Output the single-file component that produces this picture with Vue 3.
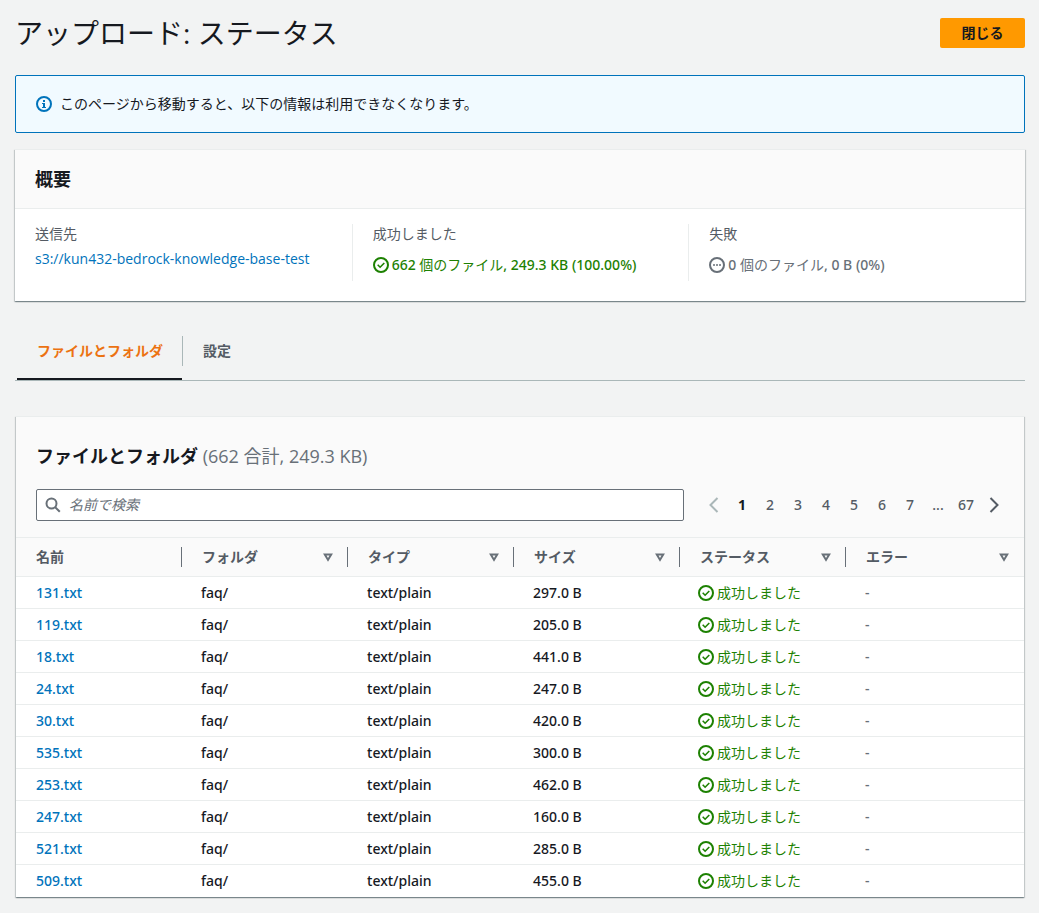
<script setup>
import { ref } from 'vue'

const columns = ['名前', 'フォルダ', 'タイプ', 'サイズ', 'ステータス', 'エラー']
const files = [
  ['131.txt', '297.0 B'],
  ['119.txt', '205.0 B'],
  ['18.txt', '441.0 B'],
  ['24.txt', '247.0 B'],
  ['30.txt', '420.0 B'],
  ['535.txt', '300.0 B'],
  ['253.txt', '462.0 B'],
  ['247.txt', '160.0 B'],
  ['521.txt', '285.0 B'],
  ['509.txt', '455.0 B'],
].map(([name, size]) => ({ name, size }))
const pages = ['1', '2', '3', '4', '5', '6', '7', '…', '67']
const page = ref('1')
const query = ref('')
</script>

<template>
  <main class="page" lang="ja">
    <header class="page-header">
      <h1>アップロード: ステータス</h1>
      <button type="button" class="primary">閉じる</button>
    </header>

    <div class="alert" role="status">
      <svg class="icon" viewBox="0 0 16 16" aria-hidden="true">
        <circle cx="8" cy="8" r="7" />
        <path class="solid" d="M7 4h2v2H7zM6 7h3v4h1v1H6v-1h1V8H6z" />
      </svg>
      <span>このページから移動すると、以下の情報は利用できなくなります。</span>
    </div>

    <section class="card summary">
      <div class="card-header"><h2>概要</h2></div>
      <dl class="facts">
        <div class="fact">
          <dt>送信先</dt>
          <dd><a href="#">s3://kun432-bedrock-knowledge-base-test</a></dd>
        </div>
        <div class="fact">
          <dt>成功しました</dt>
          <dd class="state success">
            <svg class="icon" viewBox="0 0 16 16" aria-hidden="true">
              <circle cx="8" cy="8" r="7" />
              <path d="M4.7 7.8l2.4 2.4 4.2-4.2" />
            </svg>
            <span><span class="latin">662</span> 個のファイル<span class="latin">, 249.3 KB (100.00%)</span></span>
          </dd>
        </div>
        <div class="fact">
          <dt>失敗</dt>
          <dd class="state muted">
            <svg class="icon" viewBox="0 0 16 16" aria-hidden="true">
              <circle cx="8" cy="8" r="7" />
              <path d="M4 8h2M7 8h2M10 8h2" />
            </svg>
            <span><span class="latin">0</span> 個のファイル<span class="latin">, 0 B (0%)</span></span>
          </dd>
        </div>
      </dl>
    </section>

    <div class="tabs" role="tablist">
      <button type="button" role="tab" aria-selected="true" class="tab active"><span>ファイルとフォルダ</span></button>
      <button type="button" role="tab" aria-selected="false" class="tab"><span>設定</span></button>
    </div>

    <section class="card files">
      <div class="files-header">
        <h2>ファイルとフォルダ <span class="counter">(662 合計, 249.3 KB)</span></h2>
        <div class="tools">
          <label class="search">
            <svg class="icon" viewBox="0 0 16 16" aria-hidden="true">
              <circle cx="6.5" cy="6.5" r="5" />
              <path d="M10.2 10.2l4.6 4.6" />
            </svg>
            <input v-model="query" type="search" placeholder="名前で検索" aria-label="名前で検索" />
          </label>
          <nav class="pagination latin" aria-label="ページ">
            <button type="button" class="arrow" disabled aria-label="前へ">
              <svg class="icon" viewBox="0 0 16 16"><path d="M11.5 1L4.5 8l7 7" /></svg>
            </button>
            <template v-for="p in pages" :key="p">
              <span v-if="p === '…'" class="dots">...</span>
              <button v-else type="button" :class="{ current: p === page }" @click="page = p">{{ p }}</button>
            </template>
            <button type="button" class="arrow" aria-label="次へ">
              <svg class="icon" viewBox="0 0 16 16"><path d="M4.5 1l7 7-7 7" /></svg>
            </button>
          </nav>
        </div>
      </div>
      <table>
        <thead>
          <tr>
            <th v-for="(c, i) in columns" :key="c" scope="col">
              <div class="head">
                <span>{{ c }}</span>
                <svg v-if="i > 0" class="sort" viewBox="0 0 12 10" aria-hidden="true">
                  <path d="M2.8 2.5h6.4L6 7.9z" />
                </svg>
              </div>
            </th>
          </tr>
        </thead>
        <tbody>
          <tr v-for="f in files" :key="f.name">
            <td class="name latin"><a href="#">{{ f.name }}</a></td>
            <td class="latin">faq/</td>
            <td class="latin">text/plain</td>
            <td class="latin">{{ f.size }}</td>
            <td class="status">
              <div class="state success">
                <svg class="icon" viewBox="0 0 16 16" aria-hidden="true">
                  <circle cx="8" cy="8" r="7" />
                  <path d="M4.7 7.8l2.4 2.4 4.2-4.2" />
                </svg>
                <span>成功しました</span>
              </div>
            </td>
            <td class="error latin">-</td>
          </tr>
        </tbody>
      </table>
    </section>
  </main>
</template>

<style>
body {
  margin: 0;
  background: #f2f3f3;
}
</style>

<style scoped>
.page {
  box-sizing: border-box;
  padding: 15px 14px 15px 15px;
  font-family: "Open Sans", "Noto Sans CJK JP", sans-serif;
  font-size: 14px;
  font-weight: 400;
  line-height: 22px;
  color: #16191f;
}
.latin {
  font-family: "Noto Sans", "Noto Sans CJK JP", sans-serif;
  font-weight: 500;
}
h1, h2, dl, dd {
  margin: 0;
}
button, input {
  font: inherit;
  color: inherit;
}
button {
  padding: 0;
  border: 0;
  background: none;
  cursor: pointer;
}
a {
  color: #0073bb;
  text-decoration: none;
}
.icon {
  flex: none;
  width: 16px;
  height: 16px;
  fill: none;
  stroke: currentColor;
  stroke-width: 2;
}
.page-header {
  display: flex;
  align-items: center;
  justify-content: space-between;
  margin-bottom: 24px;
}
.page-header h1 {
  font-size: 28px;
  font-weight: 400;
  line-height: 36px;
}
.primary {
  width: 85px;
  height: 30px;
  border-radius: 2px;
  background: #ff9900;
  font-weight: 700;
}
.alert {
  display: flex;
  align-items: center;
  gap: 8px;
  margin-bottom: 16px;
  padding: 17px 20px;
  border: 1px solid #0073bb;
  border-radius: 2px;
  background: #f1faff;
}
.alert .icon {
  color: #0073bb;
}
.alert .solid {
  fill: currentColor;
  stroke: none;
}
.card {
  border-top: 1px solid #eaeded;
  background: #fff;
  box-shadow: 0 1px 1px 0 rgba(0, 28, 36, 0.3), 1px 1px 1px 0 rgba(0, 28, 36, 0.15), -1px 1px 1px 0 rgba(0, 28, 36, 0.15);
}
h2 {
  font-size: 18px;
  font-weight: 700;
  line-height: 22px;
}
.card-header {
  padding: 18px 20px;
  border-bottom: 1px solid #eaeded;
  background: #fafafa;
}
.facts {
  display: grid;
  grid-template-columns: repeat(3, 1fr);
  padding: 15px 0 20px;
}
.fact {
  min-height: 57px;
  padding-left: 20px;
}
.fact + .fact {
  border-left: 1px solid #eaeded;
}
.fact dt {
  line-height: 20px;
  color: #545b64;
}
.fact dd {
  margin-top: 4px;
}
.state {
  display: flex;
  align-items: center;
  gap: 3px;
}
.fact .state {
  margin-top: 10px;
}
.state .icon path {
  stroke-width: 1.6;
}
.success {
  color: #1d8102;
}
.muted {
  color: #687078;
}
.tabs {
  display: flex;
  margin: 27px 0 35px;
  padding: 0 2px;
  border-bottom: 1px solid #aab7b8;
}
.tab {
  padding: 8px 0 12px;
  border-bottom: 2px solid transparent;
  font-weight: 700;
  color: #545b64;
}
.tab span {
  display: block;
  padding: 4px 19px 4px 20px;
}
.tab + .tab span {
  border-left: 1px solid #aab7b8;
}
.tab.active {
  border-bottom-color: #16191f;
  color: #ec7211;
}
.files {
  margin: 0 1px;
}
.files-header {
  padding: 28px 16px 16px 20px;
  border-bottom: 1px solid #eaeded;
  background: #fafafa;
}
.counter {
  font-weight: 400;
  color: #687078;
}
.tools {
  display: flex;
  gap: 16px;
  margin-top: 22px;
}
.search {
  box-sizing: border-box;
  display: flex;
  flex: 1;
  align-items: center;
  gap: 8px;
  height: 32px;
  padding: 0 8px;
  border: 1px solid #687078;
  border-radius: 2px;
  background: #fff;
}
.search .icon {
  color: #687078;
}
.search input {
  flex: 1;
  min-width: 0;
  padding: 0;
  border: 0;
  outline: 0;
  background: none;
}
.search input::placeholder {
  font-style: italic;
  color: #687078;
}
.pagination {
  display: flex;
  align-items: center;
  color: #545b64;
}
.pagination button, .dots {
  display: flex;
  align-items: center;
  justify-content: center;
  width: 28px;
  height: 22px;
}
.pagination .current {
  font-weight: 700;
  color: #16191f;
}
.pagination .arrow:disabled {
  color: #aab7b8;
}
table {
  width: 100%;
  table-layout: fixed;
  border-collapse: separate;
  border-spacing: 0;
}
th {
  width: 16.47%;
  padding: 8px 0;
  border-bottom: 1px solid #eaeded;
  background: #fafafa;
  color: #545b64;
}
th:last-child {
  width: auto;
}
.head {
  display: flex;
  align-items: center;
  justify-content: space-between;
  padding: 0 13px 0 20px;
  border-right: 1px solid #687078;
  height: 20px;
  margin: 1px 0;
}
th:last-child .head {
  border-color: transparent;
}
.sort {
  width: 12px;
  height: 10px;
  fill: none;
  stroke: #687078;
  stroke-width: 2;
}
td {
  height: 31px;
  padding: 0 0 0 19px;
  border-bottom: 1px solid #eaeded;
}
td.name {
  padding-left: 20px;
}
td.status {
  padding-left: 18px;
}
tr:last-child td {
  border-bottom-color: transparent;
}
.error {
  color: #687078;
}
</style>
